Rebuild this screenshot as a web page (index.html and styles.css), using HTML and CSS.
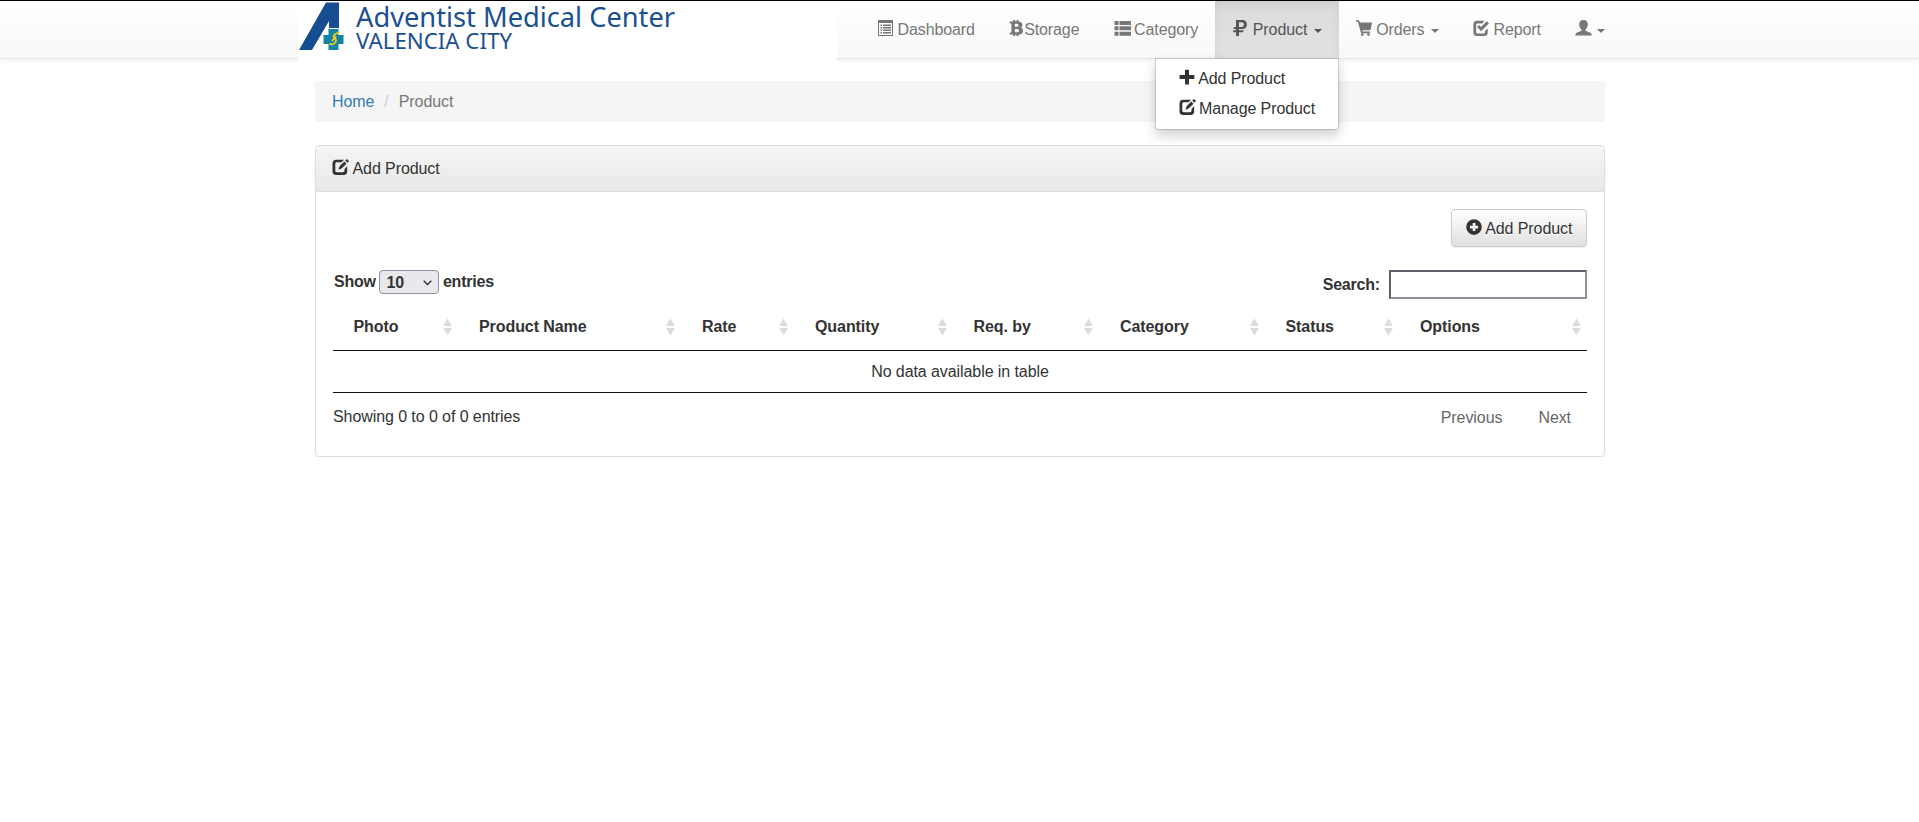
FILE: index.html
```html
<!DOCTYPE html>
<html lang="en">
<head>
<meta charset="utf-8">
<title>Product</title>
<link rel="stylesheet" href="styles.css">
</head>
<body>
<svg class="sprite" aria-hidden="true">
  <symbol id="i-list-alt" viewBox="0 0 16 16"><path fill-rule="evenodd" d="M1 0h15v16H1zM2 3v12h13V3z"/><path d="M3.500 4.500h1.500V6H3.500zM6 4.500h8V6H6zM3.500 7h1.500v1.500H3.500zM6 7h8v1.500H6zM3.500 9.500h1.500V11H3.500zM6 9.500h8V11H6zM3.500 12h1.500v1.500H3.500zM6 12h8v1.500H6z"/></symbol>
  <symbol id="i-bitcoin" viewBox="0 0 16 16"><path fill-rule="evenodd" d="M.8 1.400h3.400V0h2.100v1.400h1.200V0h2.100v1.600c2.500.3 3.800 1.500 3.800 3.400 0 1.200-.6 2.100-1.600 2.600 1.500.6 2.200 1.700 2.200 3.200 0 2.200-1.500 3.600-4.400 3.800V16H7.500v-1.400H6.300V16H4.200v-1.400H.8v-2.200h1.600V3.600H.8zM5.800 3.700v3.100h1.800c1.200 0 1.900-.5 1.900-1.600 0-1-.7-1.500-1.900-1.500zM5.800 9v3.300h2.200c1.300 0 2-.5 2-1.600 0-1.200-.8-1.700-2-1.700z"/></symbol>
  <symbol id="i-th-list" viewBox="0 0 17 16"><path d="M.5 1h4v4h-4zM5.500 1H17v4H5.500zM.5 6.300h4v4h-4zM5.500 6.300H17v4H5.500zM.5 11.700h4v4h-4zM5.500 11.700H17v4H5.500z"/></symbol>
  <symbol id="i-ruble" viewBox="0 0 16 16"><path fill-rule="evenodd" d="M4 0h6.300C13.300 0 14.800 1.700 14.800 4.500c0 2.800-1.500 4.500-4.500 4.500H7v1.300h5l-1.200 2H7V16H4v-3.700H1.200v-2H4V9H1.200l1-2H4zM7 2.200V7h2.800c1.500 0 2.100-.9 2.100-2.400s-.6-2.400-2.100-2.400z"/></symbol>
  <symbol id="i-cart" viewBox="0 0 16 16"><path d="M0 .2h3L3.900 2.500H16l-1.300 7.100c-.1.500-.4.700-.9.700H6.200l.4 1.300h7.300v1.600H5.100L1.900 1.700H0z"/><circle cx="6.300" cy="14.600" r="1.400"/><circle cx="12.500" cy="14.600" r="1.400"/></symbol>
  <symbol id="i-check" viewBox="0 0 16 16"><path d="M11.500 .7H4C1.500.7.400 2 .4 4.200v8C.4 14.600 1.600 16 4 16h7c2.500 0 3.700-1.300 3.700-3.600V8.400l-2.700 2.700v.8c0 1-.5 1.500-1.500 1.500H4.700c-1 0-1.500-.5-1.500-1.500V4.900c0-1 .5-1.500 1.500-1.500h4.500z"/><path d="M4.200 6.900 6.100 5l1.900 2L13.700 1.200 15.900 3.400 8 11.200z"/></symbol>
  <symbol id="i-user" viewBox="0 0 17 16"><path d="M8.500 0C11 0 12.800 1.600 12.800 4.200c0 2.200-.8 4.200-2.300 5.300v1.300l4.300 1.600c1.400.5 1.900 1.200 1.900 3.200H.3c0-2 .5-2.700 1.900-3.200l4.300-1.600V9.500C5 8.400 4.200 6.400 4.200 4.200 4.200 1.600 6 0 8.500 0z"/></symbol>
  <symbol id="i-plus" viewBox="0 0 16 16"><path d="M6 .8h4v5.300H15.400v4H10v5.400H6V10.100H.6v-4H6z"/></symbol>
  <symbol id="i-edit" viewBox="0 0 17 16"><path d="M12 .7H4.200C1.700.7.500 2 .5 4.500v7.700c0 2.500 1.200 3.800 3.700 3.800h7.300c2.500 0 3.700-1.300 3.700-3.800V7.300l-2.700 2.700v1.500c0 1.200-.6 1.700-1.600 1.700H4.900c-1.100 0-1.600-.6-1.600-1.600V5c0-1.100.5-1.700 1.600-1.700h4.600z"/><path d="M12.300 2.500 14.500 4.700 9.600 9.500 6.400 10.700l1.200-3.500zM13.200 1.600l1.200-1.200c.3-.3.800-.3 1.100 0l1.100 1.100c.3.300.3.800 0 1.100l-1.200 1.200z"/></symbol>
  <symbol id="i-plus-sign" viewBox="0 0 16 16"><path fill-rule="evenodd" d="M8 .3a7.800 7.800 0 1 1 0 15.600A7.800 7.800 0 0 1 8 .3zM6.700 4v2.700H4v2.700h2.700v2.700h2.700V9.400h2.700V6.700H9.400V4z"/></symbol>
  <symbol id="i-sort" viewBox="0 0 9 18"><path d="M4.500.5 9 8H0zM0 10h9l-4.500 7.500z"/></symbol>
</svg>

<header class="navbar">
  <div class="navbar-inner">
    <a class="brand" href="#">
      <svg width="540" height="65" viewBox="0 0 540 65" role="img" aria-label="Adventist Medical Center Valencia City">
        <path fill="#164d90" d="M1 49 28 1.500H41V27H31V20L14 49z"/>
        <path fill="#1283a5" d="M31 28h10v6h5v9h-5v6H31v-6h-5v-9h5z" transform="translate(-.5 0)"/>
        <path fill="none" stroke="#f2cf16" stroke-width="1.800" d="M41 33c-2-2-4 0-5 1.500-2 3 3 2.500 2 5.500s-3 4-6.500 2.800M38 35.500l-4 4.500"/>
        <text class="brand-name" x="58" y="26" textLength="319" lengthAdjust="spacingAndGlyphs">Adventist Medical Center</text>
        <text class="brand-city" x="58" y="48" textLength="156" lengthAdjust="spacingAndGlyphs">VALENCIA CITY</text>
      </svg>
    </a>
    <ul class="nav">
      <li><a href="#"><svg class="icon"><use href="#i-list-alt"/></svg> Dashboard</a></li>
      <li><a href="#"><svg class="icon icon-btc"><use href="#i-bitcoin"/></svg>Storage</a></li>
      <li><a href="#"><svg class="icon icon-wide"><use href="#i-th-list"/></svg> Category</a></li>
      <li class="open">
        <a href="#"><svg class="icon"><use href="#i-ruble"/></svg> Product <b class="caret"></b></a>
        <ul class="menu">
          <li><a href="#"><svg class="icon"><use href="#i-plus"/></svg> Add Product</a></li>
          <li><a href="#"><svg class="icon icon-wide"><use href="#i-edit"/></svg> Manage Product</a></li>
        </ul>
      </li>
      <li><a href="#"><svg class="icon"><use href="#i-cart"/></svg> Orders <b class="caret"></b></a></li>
      <li><a href="#"><svg class="icon"><use href="#i-check"/></svg> Report</a></li>
      <li><a href="#"><svg class="icon icon-wide"><use href="#i-user"/></svg> <b class="caret"></b></a></li>
    </ul>
  </div>
</header>

<main class="container">
  <ol class="breadcrumb">
    <li><a href="#">Home</a></li>
    <li class="sep">/</li>
    <li class="active">Product</li>
  </ol>

  <section class="panel">
    <div class="panel-heading"><svg class="icon icon-wide"><use href="#i-edit"/></svg> Add Product</div>
    <div class="panel-body">
      <div class="actions"><button class="btn"><svg class="icon"><use href="#i-plus-sign"/></svg> Add Product</button></div>
      <div class="controls">
        <label class="length">Show
          <span class="select-wrap"><select><option>10</option></select><svg class="chevron" viewBox="0 0 9 6"><path d="M.7.7 4.500 4.500 8.300.7"/></svg></span>
          entries</label>
        <label class="search"><span>Search:</span><input type="search"></label>
      </div>
      <table class="table">
        <colgroup><col class="c1"><col class="c2"><col class="c3"><col class="c4"><col class="c5"><col class="c6"><col class="c7"><col class="c8"></colgroup>
        <thead>
          <tr>
            <th><div>Photo<svg><use href="#i-sort"/></svg></div></th>
            <th><div>Product Name<svg><use href="#i-sort"/></svg></div></th>
            <th><div>Rate<svg><use href="#i-sort"/></svg></div></th>
            <th><div>Quantity<svg><use href="#i-sort"/></svg></div></th>
            <th><div>Req. by<svg><use href="#i-sort"/></svg></div></th>
            <th><div>Category<svg><use href="#i-sort"/></svg></div></th>
            <th><div>Status<svg><use href="#i-sort"/></svg></div></th>
            <th><div>Options<svg><use href="#i-sort"/></svg></div></th>
          </tr>
        </thead>
        <tbody><tr><td colspan="8">No data available in table</td></tr></tbody>
      </table>
      <div class="footer">
        <div>Showing 0 to 0 of 0 entries</div>
        <div class="pager"><a>Previous</a><a>Next</a></div>
      </div>
    </div>
  </section>
</main>
</body>
</html>
```
FILE: styles.css
```css
* { box-sizing: border-box; }
body {
  margin: 0;
  background: #fff;
  color: #333;
  font: 16px/23px "Liberation Sans", Arial, sans-serif;
  letter-spacing: -.08px;
}
a { color: #337ab7; text-decoration: none; }
ul, ol { list-style: none; margin: 0; padding: 0; }
.sprite { position: absolute; width: 0; height: 0; }
.icon { width: 16px; height: 16px; fill: currentColor; vertical-align: -1px; }
.icon-wide { width: 17px; margin-right: -1px; }
.icon-btc { margin-right: -1px; }

.navbar {
  height: 59px;
  border-top: 1px solid #000;
  border-bottom: 1px solid #e7e7e7;
  background: linear-gradient(#fff, #f8f8f8);
  box-shadow: 0 1px 5px rgba(0, 0, 0, .075);
}
.navbar-inner {
  display: flex;
  justify-content: space-between;
  align-items: flex-start;
  width: 1324.6px;
  height: 57px;
  margin-left: 298px;
}
.brand { width: 539px; height: 66px; background: #fff; letter-spacing: 0; }
.brand svg { display: block; }
.brand text { font-family: "Noto Sans", "Open Sans", sans-serif; fill: #1c4f92; }
.brand-name { font-size: 28px; }
.brand-city { font-size: 21.5px; }

.nav { display: flex; letter-spacing: -.1px; }
.nav > li { position: relative; }
.nav > li > a { display: block; height: 57px; padding: 17px 17.14px 0; color: #777; white-space: nowrap; }
.nav > .open > a {
  color: #555;
  background: linear-gradient(#dbdbdb, #e2e2e2);
  box-shadow: inset 0 3px 9px rgba(0, 0, 0, .075);
}
.caret {
  display: inline-block;
  margin-left: 2px;
  vertical-align: middle;
  border: 4px solid transparent;
  border-top-color: currentColor;
  border-bottom: 0;
}
.menu {
  position: absolute;
  top: 57px;
  right: 0;
  z-index: 5;
  width: 183.5px;
  height: 72px;
  padding: 6px 0;
  background: #fff;
  background-clip: padding-box;
  border: 1px solid rgba(0, 0, 0, .15);
  border-radius: 0 0 4px 4px;
  box-shadow: 0 6px 12px rgba(0, 0, 0, .175);
}
.menu a { display: block; height: 30px; padding: 2px 0 0 22.5px; color: #333; white-space: nowrap; }

.container { width: 1290px; margin: 22px 0 0 315px; }
.breadcrumb {
  display: flex;
  height: 41px;
  padding: 9px 17px 0;
  background: #f5f5f5;
  border-radius: 4px;
}
.sep { padding: 0 10.5px 0 9.5px; color: #ccc; }
.active { color: #777; }

.panel {
  height: 312px;
  margin-top: 23px;
  border: 1px solid #ddd;
  border-radius: 4px;
  box-shadow: 0 1px 2px rgba(0, 0, 0, .05);
}
.panel-heading {
  height: 46px;
  padding: 11px 16px 0;
  border-bottom: 1px solid #ddd;
  border-radius: 3px 3px 0 0;
  background: linear-gradient(#f5f5f5, #e8e8e8);
}
.panel-heading .icon { margin-right: 0; }
.panel-body { padding: 17px; }
.actions { display: flex; justify-content: flex-end; }
.btn {
  width: 136px;
  height: 38px;
  padding: 1px 0 0;
  border: 1px solid #ccc;
  border-radius: 4px;
  background: linear-gradient(#fff, #e0e0e0);
  color: #333;
  font: inherit;
  letter-spacing: inherit;
  text-shadow: 0 1px 0 #fff;
  box-shadow: 0 1px 1px rgba(0, 0, 0, .075);
}
.btn .icon { vertical-align: -1px; }
.controls { display: flex; justify-content: space-between; margin-top: 23px; height: 36px; font-weight: 700; }
.length { display: flex; align-items: flex-start; height: 24px; padding-left: 1px; gap: 3.5px; letter-spacing: -.2px; }
.select-wrap { position: relative; display: flex; }
.length select {
  appearance: none;
  width: 60px;
  height: 24px;
  padding: 0 6px 1px;
  border: 1px solid #8f8f9d;
  border-radius: 4px;
  background: #e9e9ed;
  color: #333;
  font: inherit;
}
.chevron { position: absolute; right: 7px; top: 10px; width: 9px; height: 6px; fill: none; stroke: #333; stroke-width: 1.4; }
.search { display: flex; align-items: center; height: 29px; gap: 9px; letter-spacing: -.2px; }
.search input {
  appearance: none;
  width: 198px;
  height: 29px;
  border: 2px solid;
  border-color: #5f5e6b #8f8f9d #8f8f9d #5f5e6b;
  background: #fff;
  font: inherit;
  outline: 0;
}

.table { width: 1254px; table-layout: fixed; border-collapse: separate; border-spacing: 0; }
.c1 { width: 125.5px; } .c2 { width: 223px; } .c3 { width: 113px; } .c4 { width: 158.5px; }
.c5 { width: 146.5px; } .c6 { width: 165.5px; } .c7 { width: 134.5px; } .c8 { width: 187.5px; }
th { height: 45px; padding: 0 6.5px 3px 20.5px; border-bottom: 1px solid #111; text-align: left; }
th div { display: flex; align-items: center; justify-content: space-between; white-space: nowrap; }
th svg { width: 9px; height: 18px; fill: #dcdcdc; }
td { height: 42px; padding: 0 0 1px; border-bottom: 1px solid #111; text-align: center; }
.footer { display: flex; justify-content: space-between; padding-top: 12px; }
.pager { display: flex; gap: 36px; padding: 1px 16px 0 0; }
.pager a { color: #666; }
```
